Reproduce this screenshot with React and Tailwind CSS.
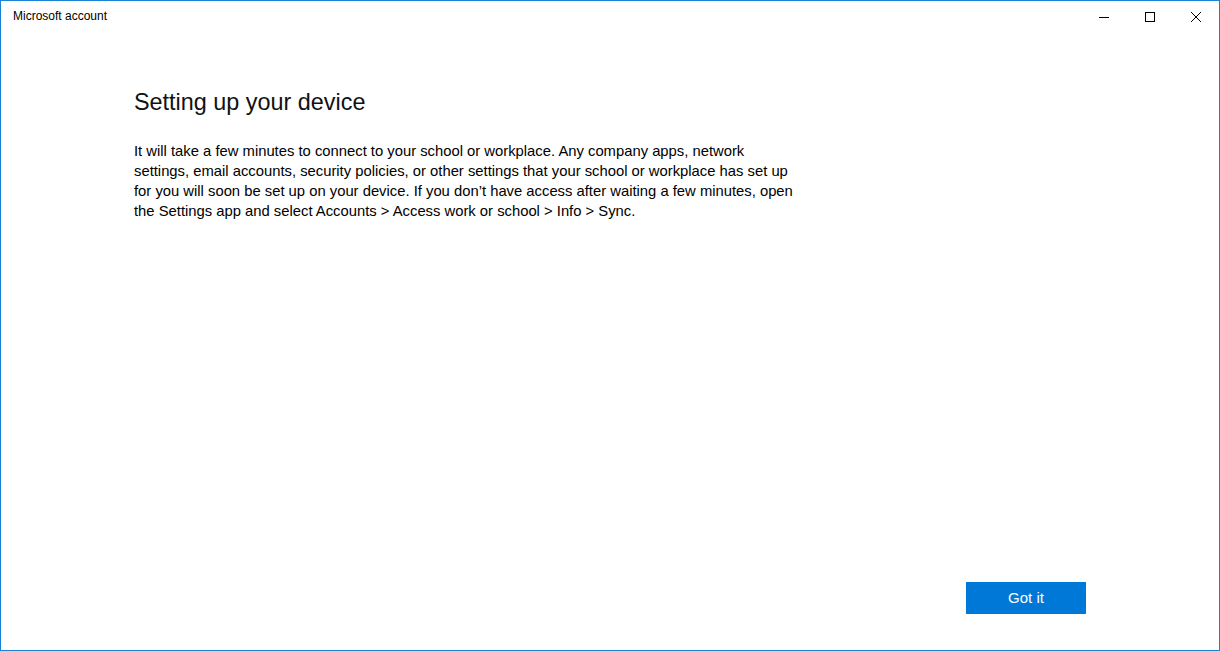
import React from 'react'

const lines = [
  'It will take a few minutes to connect to your school or workplace. Any company apps, network',
  'settings, email accounts, security policies, or other settings that your school or workplace has set up',
  'for you will soon be set up on your device. If you don\u2019t have access after waiting a few minutes, open',
  'the Settings app and select Accounts > Access work or school > Info > Sync.',
]

function Caption() {
  return (
    <div className="flex h-8 items-stretch">
      <div className="flex-1 flex items-center pl-3 pb-[2px] text-[12px] text-black">Microsoft account</div>
      <button className="w-[46px] flex items-center justify-center hover:bg-black/10">
        <svg width="10" height="10" viewBox="0 0 10 10"><path d="M0 5.5h10" stroke="#000" strokeWidth="1" /></svg>
      </button>
      <button className="w-[46px] flex items-center justify-center hover:bg-black/10">
        <svg width="10" height="10" viewBox="0 0 10 10"><rect x="0.5" y="0.5" width="9" height="9" fill="none" stroke="#000" strokeWidth="1" /></svg>
      </button>
      <button className="w-[46px] flex items-center justify-center hover:bg-red-600">
        <svg width="10" height="10" viewBox="0 0 10 10"><path d="M0 0L10 10M10 0L0 10" stroke="#000" strokeWidth="1" /></svg>
      </button>
    </div>
  )
}

export default function App() {
  return (
    <div
      className="w-[1220px] h-[651px] bg-white border border-[#1883d7] flex flex-col overflow-hidden"
      style={{ fontFamily: '"Segoe UI", "Liberation Sans", Arial, sans-serif' }}
    >
      <Caption />

      <div className="flex-1 flex flex-col pl-[133px] pt-[55px]">
        <h1 className="text-[23.4px] leading-[29px] text-[#111] font-normal">Setting up your device</h1>
        <p className="mt-[24px] text-[14.8px] leading-[20px] text-black">
          {lines.map(l => (
            <span key={l} className="block whitespace-nowrap">{l}</span>
          ))}
        </p>
      </div>

      <div className="flex justify-end pr-[133px] pb-[36px]">
        <button className="w-[120px] h-8 bg-[#0078d7] text-white text-[15px]">Got it</button>
      </div>
    </div>
  )
}
